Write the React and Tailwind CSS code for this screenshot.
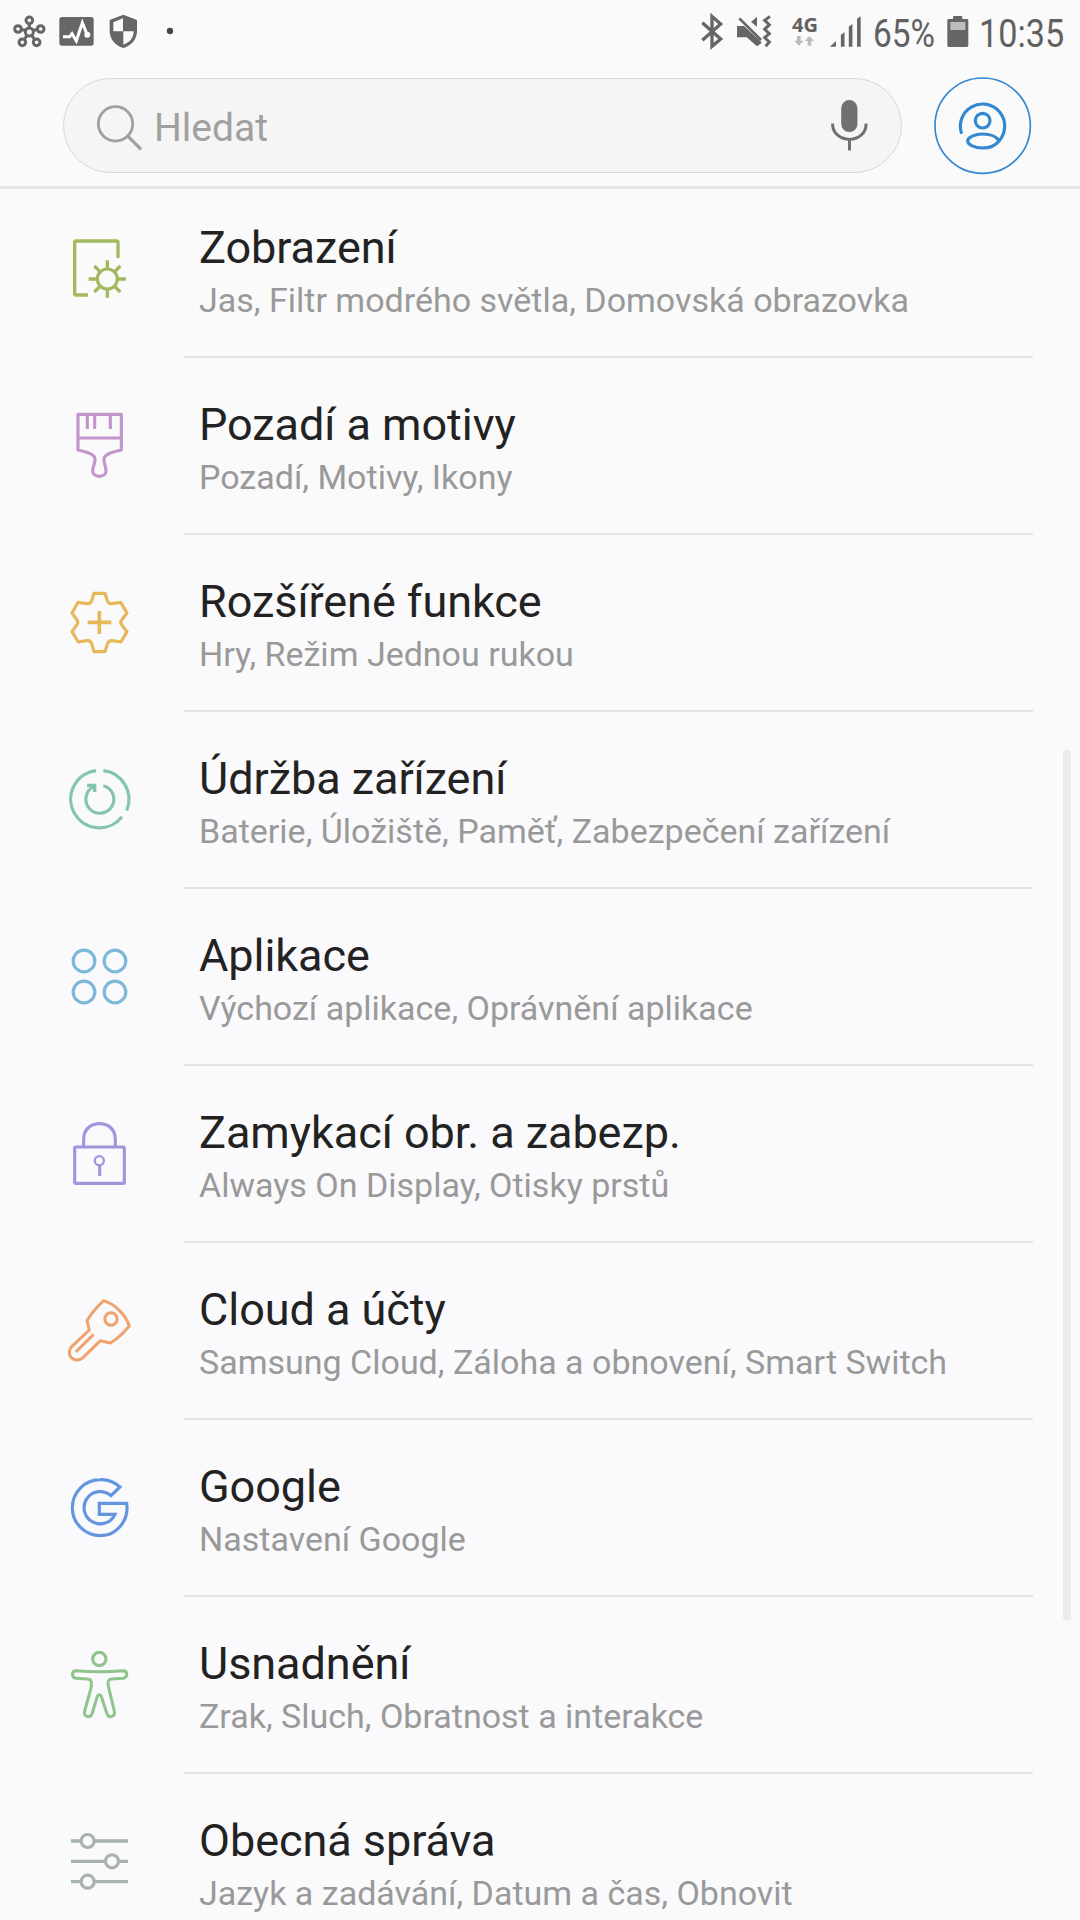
import React from "react";

const items = [
    { title: "Zobrazení", subtitle: "Jas, Filtr modrého světla, Domovská obrazovka", icon: DisplayIcon },
    { title: "Pozadí a motivy", subtitle: "Pozadí, Motivy, Ikony", icon: BrushIcon },
    { title: "Rozšířené funkce", subtitle: "Hry, Režim Jednou rukou", icon: GearIcon },
    { title: "Údržba zařízení", subtitle: "Baterie, Úložiště, Paměť, Zabezpečení zařízení", icon: MaintenanceIcon },
    { title: "Aplikace", subtitle: "Výchozí aplikace, Oprávnění aplikace", icon: AppsIcon },
    { title: "Zamykací obr. a zabezp.", subtitle: "Always On Display, Otisky prstů", icon: LockIcon },
    { title: "Cloud a účty", subtitle: "Samsung Cloud, Záloha a obnovení, Smart Switch", icon: KeyIcon },
    { title: "Google", subtitle: "Nastavení Google", icon: GoogleIcon },
    { title: "Usnadnění", subtitle: "Zrak, Sluch, Obratnost a interakce", icon: PersonIcon },
    { title: "Obecná správa", subtitle: "Jazyk a zadávání, Datum a čas, Obnovit", icon: SlidersIcon },
];

function RowIcon({ viewBox, color, children }) {
    return (
        <svg viewBox={viewBox} width="100" height="100" fill="none" stroke={color} strokeWidth="9.500" strokeLinejoin="round" className="shrink-0">
            {children}
        </svg>
    );
}

function DisplayIcon() {
    return (
        <RowIcon viewBox="0 -3 300 300" color="#a3b960">
            <path d="M204 114V67Q204 63 200 63H78Q74 63 74 67V221Q74 225 78 225H114" strokeWidth="10" />
            <circle cx="172" cy="177" r="30" />
            <path d="M172 146V121M172 208V233M141 177H116M203 177H228M150 155L133 138M194 155L211 138M150 199L133 216M194 199L211 216" strokeWidth="10" />
        </RowIcon>
    );
}

function BrushIcon() {
    return (
        <RowIcon viewBox="0 528 300 300" color="#c296cd">
            <path d="M84 583H214V690C190 696 162 701 162 718C162 734 168 740 168 752C168 763 159 769 148 769C137 769 128 763 128 752C128 740 135 734 135 718C135 701 108 696 84 690Z" />
            <path d="M84 654H214M112 583V627M134 583V627M181 583V627" />
        </RowIcon>
    );
}

function GearIcon() {
    return (
        <RowIcon viewBox="0 9 300 300" color="#e8b75a">
            <path d="M132 70H165L172 92Q176 103 187 101L212 97L231 129L215 150Q209 157 215 164L231 185L213 216L187 212Q177 210 173 220L165 245H132L125 221Q121 210 110 212L85 216L66 185L81 164Q86 157 81 150L66 129L84 97L110 101Q121 103 125 92Z" />
            <path d="M148 123V192M113 157H184" strokeWidth="11" />
        </RowIcon>
    );
}

function MaintenanceIcon() {
    return (
        <RowIcon viewBox="0 540 300 300" color="#84c4b0">
            <path d="M138 602A86 86 0 1 0 216 740" />
            <path d="M160 602A86 86 0 0 1 230 721" />
            <path d="M160 647A42 42 0 1 1 131 650" />
            <path d="M111 646H134V666" strokeWidth="10" strokeLinejoin="miter" />
        </RowIcon>
    );
}

function AppsIcon() {
    return (
        <RowIcon viewBox="0 -9 300 300" color="#7cb9d9">
            <circle cx="102" cy="93" r="32.5" />
            <circle cx="195" cy="93" r="32.5" />
            <circle cx="102" cy="186" r="32.5" />
            <circle cx="195" cy="186" r="32.5" />
        </RowIcon>
    );
}

function LockIcon() {
    return (
        <RowIcon viewBox="0 522 300 300" color="#a195dc">
            <rect x="74" y="651" width="149" height="109" rx="3" />
            <path d="M101 650V628C101 598 122 581 148.500 581S196 598 196 628V650" />
            <circle cx="148" cy="692" r="13.500" strokeWidth="7" />
            <path d="M149 706V738" />
        </RowIcon>
    );
}

function KeyIcon() {
    return (
        <RowIcon viewBox="0 3 300 300" color="#f0a26c">
            <path d="M160 62C193 71 227 103 238 138L217 161C206 172 194 182 181 189L151 182L99 233C88 243 73 242 64 233C56 224 56 209 65 200L118 150L111 122C118 110 127 97 139 84Z" strokeWidth="9" />
            <circle cx="183" cy="117" r="18.500" strokeWidth="9" />
            <path d="M131 163L77 216" strokeWidth="9" />
        </RowIcon>
    );
}

function GoogleIcon() {
    return (
        <RowIcon viewBox="0 534 300 300" color="#6495df">
            <path d="M210 621A84 84 0 0 0 151 599A84 84 0 0 0 151 767A79 84 0 0 0 230 670H148V703H195A48.500 48.500 0 1 1 183 647Z" strokeLinejoin="miter" />
        </RowIcon>
    );
}

function PersonIcon() {
    return (
        <RowIcon viewBox="0 15 300 300" color="#8fc58a">
            <circle cx="148" cy="87" r="20" />
            <path d="M78 122Q148 128 219 122C234 122 234 142 220 145L184 147C173 149 172 159 176 173L193 243C197 260 178 266 171 252L154 199Q148 189 142 199L126 252C119 266 100 260 104 243L121 182Q126 168 124 157Q123 147 112 147L78 145C64 142 64 122 78 122Z" strokeWidth="9" />
        </RowIcon>
    );
}

function SlidersIcon() {
    return (
        <RowIcon viewBox="0 546 300 300" color="#a6b3b1">
            <path d="M63 633H92M135 633H234M63 694H165M208 694H234M63 755H92M135 755H234" strokeWidth="10" />
            <circle cx="113" cy="633" r="19.500" />
            <circle cx="186" cy="694" r="19.500" />
            <circle cx="113" cy="755" r="19.500" />
        </RowIcon>
    );
}

function StatusBar() {
    return (
        <div className="flex h-16 justify-between text-[#606060]">
            <svg viewBox="0 0 720 192" width="240" height="64" fill="none" stroke="#666" strokeWidth="9">
                {/* hub */}
                <path d="M88 94V68M88 94L122 86M88 94L107 124M88 94L70 124M88 94L54 86" />
                <g fill="#fafafa" strokeWidth="9">
                    <circle cx="88" cy="96" r="12" />
                    <circle cx="88" cy="61" r="10" />
                    <circle cx="122" cy="87" r="10" />
                    <circle cx="110" cy="127" r="10" />
                    <circle cx="67" cy="127" r="10" />
                    <circle cx="54" cy="87" r="10" />
                </g>
                {/* activity */}
                <rect x="178" y="51" width="103" height="86" rx="8" fill="#666" stroke="none" />
                <path d="M189 110H209L216 101L229 123L247 68L261 103" stroke="#fff" strokeWidth="9" />
                <circle cx="262" cy="104" r="9" fill="#fff" stroke="none" />
                {/* shield */}
                <path d="M370 44L411 60V93C411 118 394 137 370 144C346 137 329 118 329 93V60Z" fill="#666" stroke="none" />
                <path d="M369 55V94H340V67ZM370 94H401C401 114 389 128 370 134Z" fill="#fafafa" stroke="none" />
                <circle cx="510" cy="93" r="9.500" fill="#444" stroke="none" />
            </svg>
            <div className="flex w-[400px]">
                <svg viewBox="0 0 300 192" width="100" height="64" fill="none" stroke="#666" strokeWidth="9">
                    <path d="M67 68L122 117L96 139V49L122 72L67 121" strokeWidth="10" />
                    <path d="M171 78H192L244 126V130L231 139L200 112H171ZM213 66L231 50V80Z" fill="#666" stroke="none" />
                    <path d="M178 55L243 120" strokeWidth="8" />
                    <path d="M270 49L254 61L268 74L254 88L268 101L254 113L268 126L257 139" />
                </svg>
                <div className="flex w-[93px]">
                    <div className="flex w-[50px] flex-col items-end pt-[15px]">
                        <span className="w-[38px] font-['Open_Sans',sans-serif] text-[20px] leading-[20px] font-bold">4G</span>
                        <svg viewBox="0 0 60 30" width="20" height="10" fill="#bdbdbd" className="mt-[1px] mr-[16px]">
                            <path d="M9 0H20V14H29L15 29L1 14H9ZM41 29H52V15H60L46 0L32 15H41Z" />
                        </svg>
                    </div>
                    <svg viewBox="450 0 100 192" width="33" height="64" fill="#666">
                        <path d="M450 141L468 123V141ZM483 141V104L494 97V141ZM507 141V79L518 72V141ZM532 141V56L543 48V141Z" />
                    </svg>
                </div>
                <div className="w-[74px] pt-[10px]">
                    <span className="inline-block origin-left scale-x-[0.845] text-[39.5px] leading-[47px]">65%</span>
                </div>
                <svg viewBox="800 0 66 192" width="22" height="64" fill="#666" className="shrink-0">
                    <path d="M801 61Q801 57 805 57H818V51Q818 48 821 48H843Q846 48 846 51V57H860Q864 57 864 61V136Q864 141 860 141H805Q801 141 801 136Z" />
                    <rect x="810" y="66" width="45" height="24" fill="#bcbcbc" />
                </svg>
                <div className="pt-[10px] pl-[10px]">
                    <span className="inline-block origin-left scale-x-[0.865] text-[39.5px] leading-[47px]">10:35</span>
                </div>
            </div>
        </div>
    );
}

function Header() {
    return (
        <div className="flex h-[125px] items-start border-b-[3px] border-[#e6e6e6] pt-[13px] pl-[63px]">
            <div className="mt-px flex h-[95px] w-[839px] items-center rounded-full border border-[#d8d8d8] bg-[#f5f5f5]">
                <svg viewBox="170 120 140 142" width="47" height="47" fill="none" stroke="#a0a0a0" strokeWidth="8.500" className="mt-[3px] ml-[32px]">
                    <circle cx="228" cy="180" r="52" />
                    <path d="M265 217L305 257" strokeWidth="10" />
                </svg>
                <span className="mt-[5px] ml-[11px] text-[39px] leading-[46px] text-[#a0a0a0]">Hledat</span>
                <svg viewBox="150 105 118 160" width="39" height="53" fill="none" stroke="#707070" strokeWidth="9" className="mr-[32px] ml-auto">
                    <rect x="184" y="108" width="49" height="97" rx="24.500" fill="#707070" stroke="none" />
                    <path d="M158 179V183C158 208 182 227 209 227S259 208 259 183V179M209 227V261" />
                </svg>
            </div>
            <svg viewBox="461 38 294 294" width="98" height="98" fill="none" stroke="#3288d1" strokeWidth="9.500" className="ml-[32px]">
                <circle cx="607" cy="184" r="143" strokeWidth="5" />
                <path d="M544 208A66.500 66.500 0 1 1 656 230" />
                <circle cx="607" cy="169" r="22" />
                <path d="M656 230C650 217 630 209 607 209C584 209 562 219 562 230C562 241 583 251 607 251C630 251 646 243 656 230Z" />
            </svg>
        </div>
    );
}

export default function App() {
    return (
        <div className="relative h-[1920px] w-[1080px] overflow-hidden bg-linear-to-b from-[#fafafa] from-20% to-[#faf9fc] to-40% font-['Roboto',sans-serif]">
            <StatusBar />
            <Header />
            <div className="-mt-2">
                {items.map(({ title, subtitle, icon: Icon }) => (
                    <div key={title} className="flex h-[177px] items-center pl-[50px]">
                        <div className="-mt-px shrink-0">
                            <Icon />
                        </div>
                        <div className="ml-[34px] h-full w-[849px] border-b-2 border-[#e3e3e5] pt-[40px] pl-[15px]">
                            <h2 className="text-[45px] leading-[54px] tracking-[-0.05px] text-[#222]">{title}</h2>
                            <p className="mt-[5px] text-[34px] leading-[40px] text-[#999]">{subtitle}</p>
                        </div>
                    </div>
                ))}
            </div>
            <div className="absolute top-[750px] left-[1063px] h-[871px] w-2 rounded-full bg-[#ececee]" />
        </div>
    );
}
